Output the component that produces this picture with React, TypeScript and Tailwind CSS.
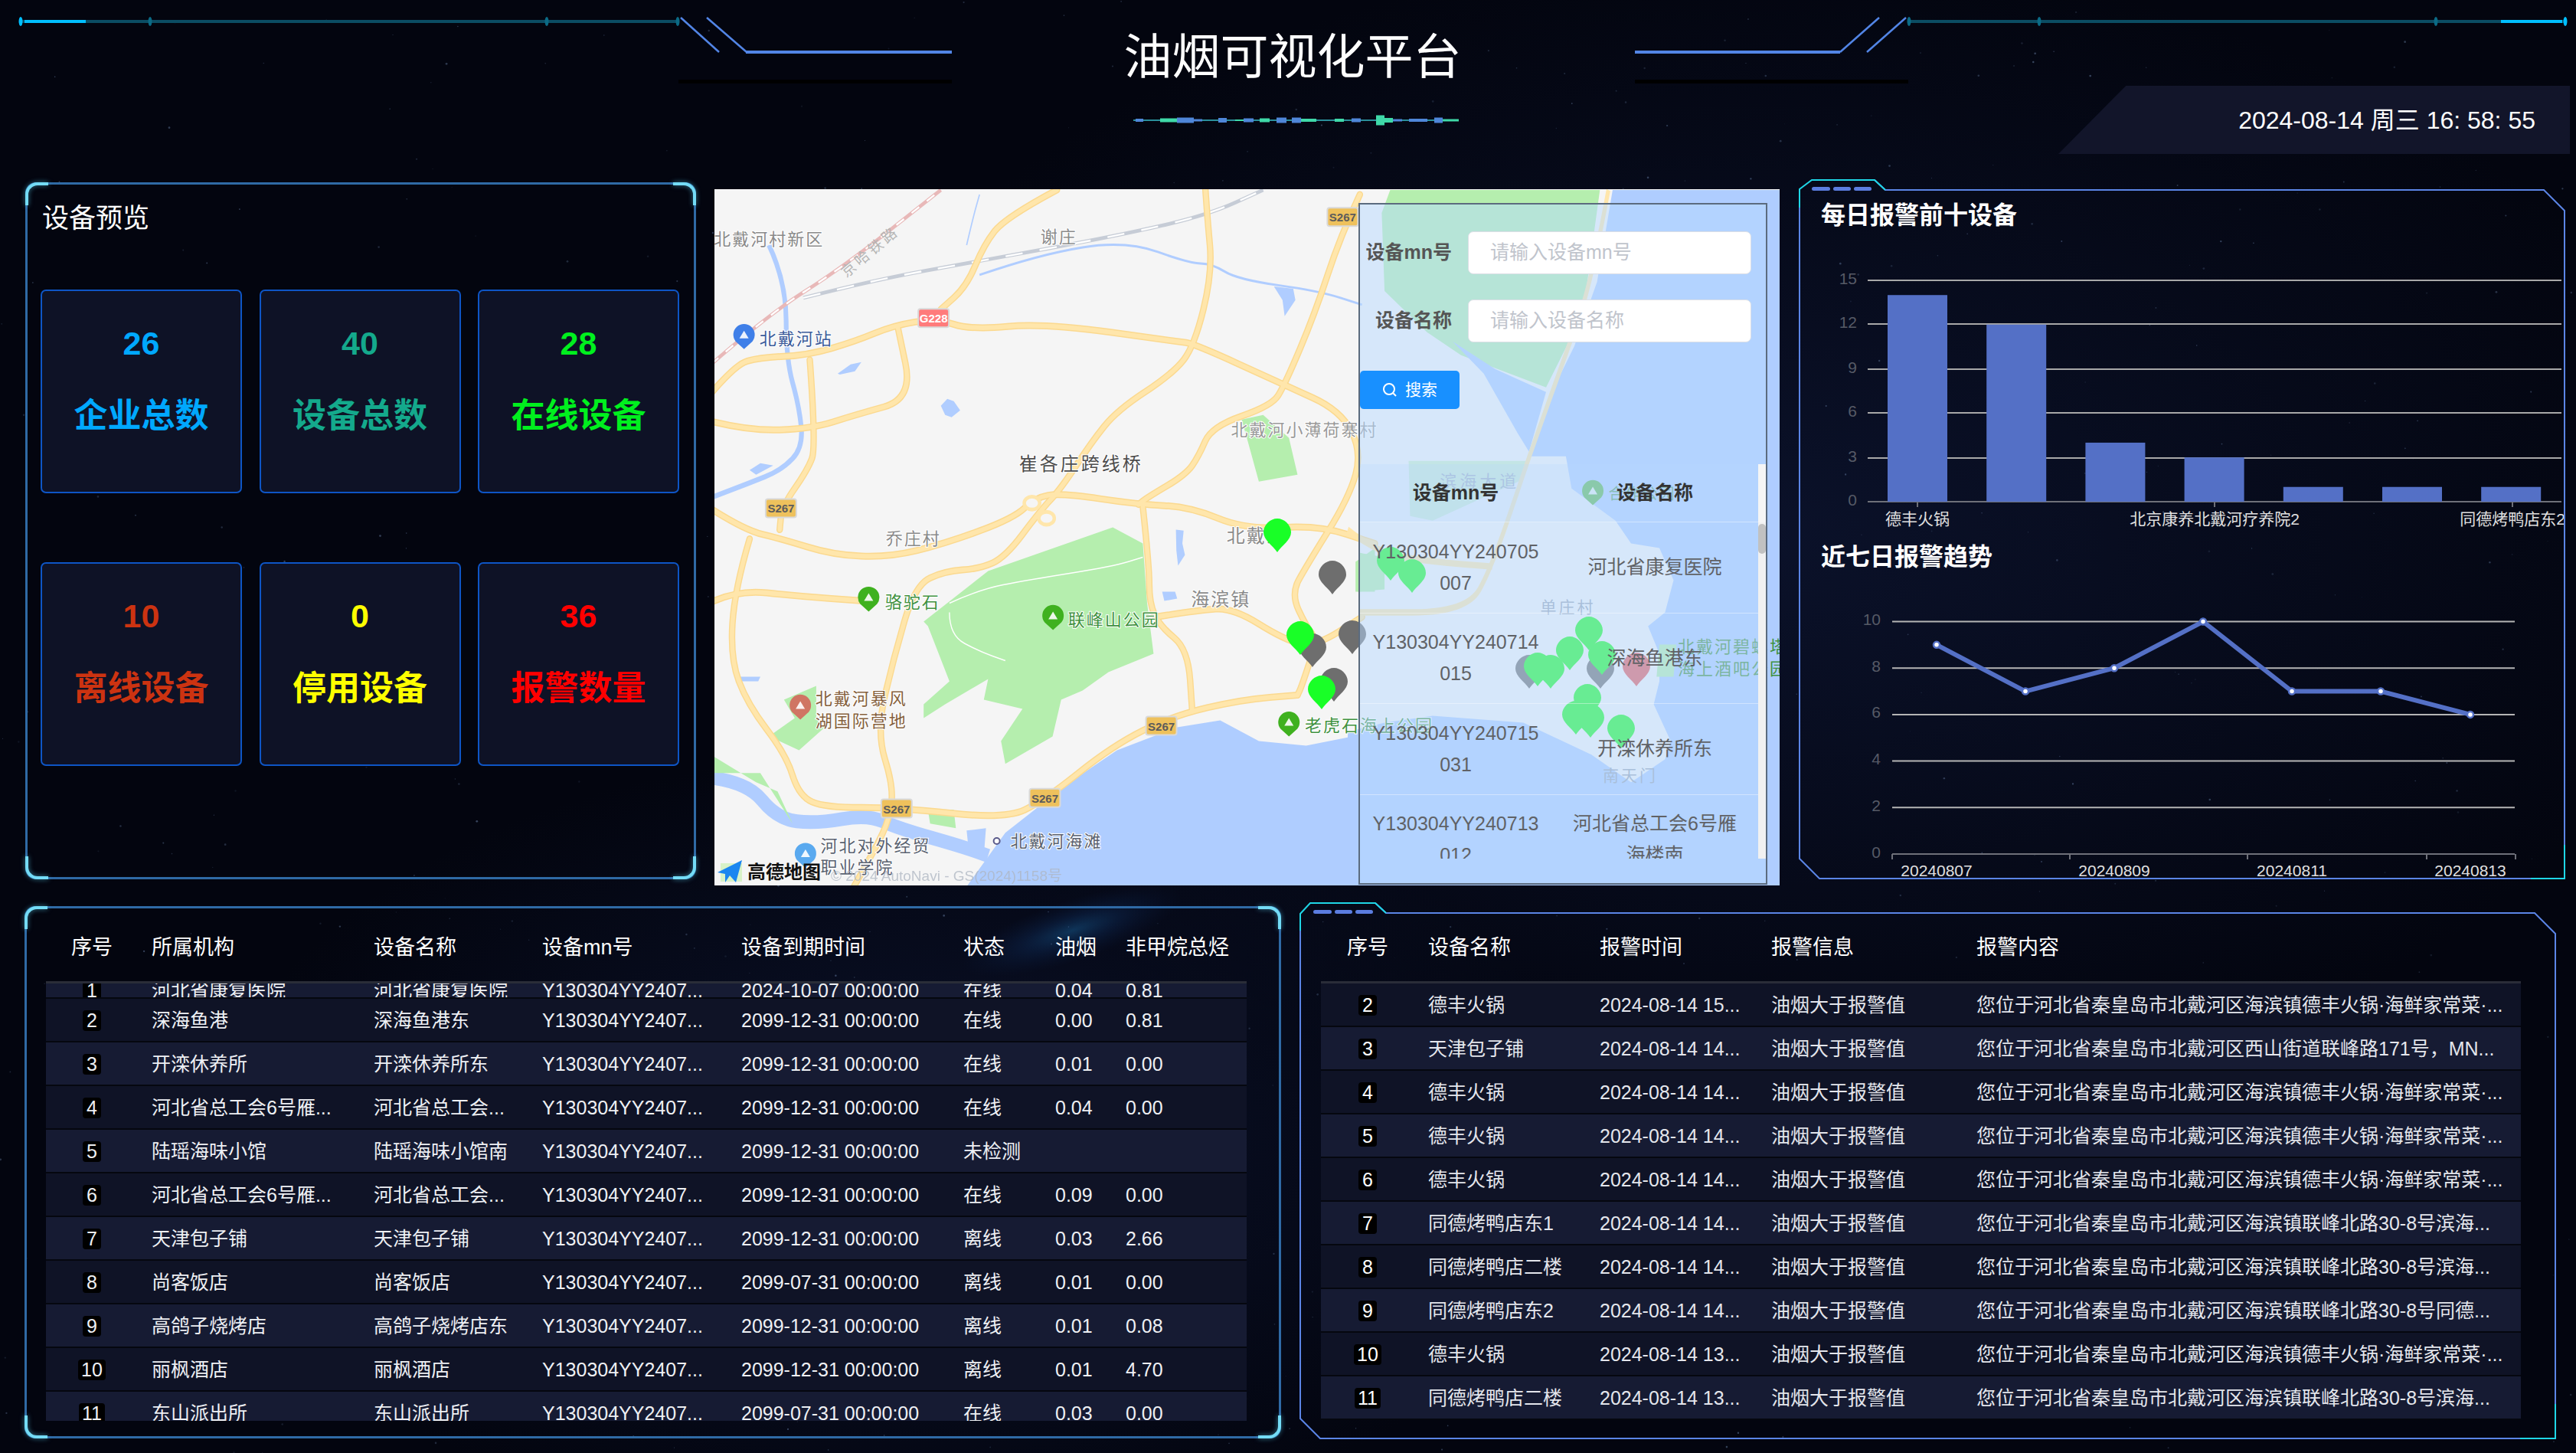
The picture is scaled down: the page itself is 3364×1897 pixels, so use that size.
import React from "react";

const font = "font-['Liberation_Sans','Noto_Sans_CJK_SC',sans-serif]";

type Pt = [number, number];

// midpoint-quadratic smoothing for map roads
function smooth(pts: Pt[]) {
  let d = `M${pts[0][0]} ${pts[0][1]}`;
  for (let i = 1; i < pts.length - 1; i++) {
    const mx = (pts[i][0] + pts[i + 1][0]) / 2;
    const my = (pts[i][1] + pts[i + 1][1]) / 2;
    d += ` Q${pts[i][0]} ${pts[i][1]} ${mx} ${my}`;
  }
  const l = pts[pts.length - 1];
  return d + ` L${l[0]} ${l[1]}`;
}

function poly(pts: Pt[]) {
  return pts.map((p) => p.join(",")).join(" ");
}

function Starfield() {
  let seed = 1337;
  const rnd = () => {
    seed = (seed * 16807) % 2147483647;
    return seed / 2147483647;
  };
  const stars = Array.from({ length: 700 }, () => ({
    x: rnd() * 3364,
    y: rnd() * 1897,
    r: 0.5 + rnd() * 0.9,
    o: 0.08 + rnd() * 0.3,
  }));
  return (
    <svg className="absolute inset-0" width={3364} height={1897}>
      <defs>
        <radialGradient id="glowA">
          <stop offset="0%" stopColor="#101a3c" stopOpacity={0.6} />
          <stop offset="100%" stopColor="#101a3c" stopOpacity={0} />
        </radialGradient>
        <radialGradient id="nebula">
          <stop offset="0%" stopColor="#1a6aa8" stopOpacity={0.45} />
          <stop offset="45%" stopColor="#123f7c" stopOpacity={0.25} />
          <stop offset="100%" stopColor="#0c2350" stopOpacity={0} />
        </radialGradient>
      </defs>
      <ellipse cx={2300} cy={700} rx={1250} ry={760} fill="url(#glowA)" />
      <ellipse cx={1180} cy={1500} rx={900} ry={520} fill="url(#glowA)" />
      <ellipse cx={1400} cy={1215} rx={150} ry={40} fill="url(#nebula)" transform="rotate(-18 1400 1215)" />
      {stars.map((s, i) => (
        <circle key={i} cx={s.x} cy={s.y} r={s.r} fill="#8fb0e0" opacity={s.o} />
      ))}
    </svg>
  );
}

const waveBars: [number, number, number, string][] = [
  [1483, 10, 4, "#4f86d9"], [1515, 22, 5, "#3fd9a8"], [1537, 22, 7, "#4f86d9"], [1559, 11, 3, "#4f86d9"],
  [1591, 11, 6, "#4f86d9"], [1613, 11, 2, "#3fd9a8"], [1624, 13, 5, "#4f86d9"], [1645, 13, 5, "#3fd9a8"],
  [1667, 13, 7, "#4f86d9"], [1687, 12, 7, "#4f86d9"], [1699, 20, 4, "#3fd9a8"], [1743, 12, 4, "#3fd9a8"],
  [1765, 12, 5, "#4f86d9"], [1797, 11, 13, "#3fd9a8"], [1808, 11, 6, "#3fd9a8"], [1819, 12, 3, "#4f86d9"],
  [1840, 24, 4, "#4f86d9"], [1873, 11, 7, "#4f86d9"], [1884, 21, 3, "#3fd9a8"],
];

function HeaderLines() {
  return (
    <svg className="absolute left-0 top-0" width={3364} height={235}>
      <rect x={27} y={26} width={858} height={4} fill="#0b4d63" />
      <rect x={32} y={26} width={80} height={4} fill="#00bfff" />
      {[27, 196, 714, 885].map((x, i) => (
        <ellipse key={x} cx={x} cy={28} rx={2.5} ry={6} fill={i === 0 ? "#00bfff" : "#0b6a85"} />
      ))}
      <line x1={889} y1={23} x2={939} y2={68} stroke="#5285e6" strokeWidth={2.5} />
      <line x1={923} y1={23} x2={975} y2={68} stroke="#5285e6" strokeWidth={2.5} />
      <rect x={974} y={66} width={269} height={4} fill="#5285e6" />
      <rect x={886} y={104} width={357} height={5} fill="#000" />

      <rect x={2493} y={26} width={858} height={4} fill="#0b4d63" />
      <rect x={3266} y={26} width={80} height={4} fill="#00bfff" />
      {[2493, 2663, 3181, 3350].map((x, i) => (
        <ellipse key={x} cx={x} cy={28} rx={2.5} ry={6} fill={i === 3 ? "#00bfff" : "#0b6a85"} />
      ))}
      <line x1={2454} y1={23} x2={2403} y2={68} stroke="#5285e6" strokeWidth={2.5} />
      <line x1={2489} y1={23} x2={2438} y2={68} stroke="#5285e6" strokeWidth={2.5} />
      <rect x={2135} y={66} width={268} height={4} fill="#5285e6" />
      <rect x={2135} y={104} width={357} height={5} fill="#000" />
    </svg>
  );
}

function Wave() {
  return (
    <svg viewBox="1480 135 425 46" className="h-[46px] w-[425px]">
      <rect x={1472} y={157} width={433} height={2} fill="#2a8f9a" />
      {waveBars.map(([x, w, h, c], i) => (
        <rect key={i} x={x} y={158 - h / 2} width={w} height={h} fill={c} />
      ))}
    </svg>
  );
}

function Header() {
  return (
    <div className="relative h-[235px] w-full">
      <HeaderLines />
      <div className="flex h-[112px] justify-center pl-[12px] pt-[43px]">
        <h1 className="relative text-[63px] font-normal leading-[63px] text-white">油烟可视化平台</h1>
      </div>
      <div className="grid grid-cols-[1480px_425px_1fr] items-center">
        <div />
        <Wave />
        <div className="flex justify-end pr-[8px]">
          <div className="flex h-[89px] w-[668px] items-center justify-end bg-[#12152a] pr-[45px] text-[32px] text-white [clip-path:polygon(13.2%_0,100%_0,100%_100%,0_100%)]">
            2024-08-14 周三 16: 58: 55
          </div>
        </div>
      </div>
    </div>
  );
}

// rounded frame with the four bright corners
function GlowFrame() {
  const corner = "absolute h-[30px] w-[30px] border-[#74dcf6] [filter:drop-shadow(0_0_3px_rgba(90,210,245,0.6))]";
  return (
    <>
      <span className={`${corner} -left-[3px] -top-[3px] rounded-tl-[16px] border-l-4 border-t-4`} />
      <span className={`${corner} -right-[3px] -top-[3px] rounded-tr-[16px] border-r-4 border-t-4`} />
      <span className={`${corner} -bottom-[3px] -left-[3px] rounded-bl-[16px] border-b-4 border-l-4`} />
      <span className={`${corner} -bottom-[3px] -right-[3px] rounded-br-[16px] border-b-4 border-r-4`} />
    </>
  );
}

const stats = [
  { n: "26", label: "企业总数", c: "text-[#00a8ff]" },
  { n: "40", label: "设备总数", c: "text-[#14a98c]" },
  { n: "28", label: "在线设备", c: "text-[#00f01e]" },
  { n: "10", label: "离线设备", c: "text-[#cc3311]" },
  { n: "0", label: "停用设备", c: "text-[#ffff00]" },
  { n: "36", label: "报警数量", c: "text-[#ff0000]" },
];

function DevicePreview() {
  return (
    <section className="relative mt-[3px] h-[910px] w-[876px] rounded-[14px] border-[3px] border-[#2f6aa5] pl-[17px] pt-[24px]">
      <GlowFrame />
      <h2 className="pl-[2px] text-[35px] font-normal leading-[40px] text-white">设备预览</h2>
      <div className="mt-[73px] grid w-[834px] grid-cols-[263px_263px_263px] gap-x-[22.5px] gap-y-[90px]">
        {stats.map((s) => (
          <div key={s.label} className={`flex h-[266px] flex-col items-center rounded-[7px] border-2 border-[#0e55c5] bg-[#0e1226] pt-[47px] font-bold ${s.c}`}>
            <div className="text-[43px] leading-[42px]">{s.n}</div>
            <div className="mt-[52px] text-[44px] leading-[44px]">{s.label}</div>
          </div>
        ))}
      </div>
    </section>
  );
}

const ROAD = "#fbd98f";
const ROAD_IN = "#ffe6ab";

const z4Roads: Pt[][] = [
  [[1165,20],[1170,90],[1182,210],[1140,370],[1090,430],[960,510],[900,580],[830,680],[780,730],[700,830],[640,855],[560,860],[490,890],[440,1050],[400,1210],[440,1330],[430,1400],[400,1460],[340,1560]],
  [[0,490],[70,410],[130,395],[240,390],[350,360],[440,325],[540,310],[620,335],[790,320],[1100,360],[1140,365],[1350,455],[1480,510],[1530,600],[1500,700],[1400,850],[1365,910],[1400,980],[1425,1010],[1390,1110],[1380,1130]],
  [[1525,40],[1480,130],[1420,300],[1350,455],[1320,500],[1180,545],[1150,610],[1120,650],[1030,700],[1010,715]],
  [[820,30],[700,90],[650,150],[610,240],[550,290]],
  [[0,530],[100,555],[250,550],[350,520],[485,485],[450,330]],
  [[245,400],[260,590],[240,640],[180,720],[175,770]],
  [[0,715],[90,770],[180,790],[300,825],[430,830],[560,800],[720,745],[770,700],[830,690],[1010,715],[1130,720],[1260,770],[1430,760],[1560,800]],
  [[0,935],[70,900],[220,915],[370,925]],
  [[105,790],[70,900],[60,1050],[100,1150],[190,1260],[220,1350],[280,1375],[450,1375],[700,1400],[790,1360],[950,1240],[1090,1175],[1250,1140],[1380,1130]],
  [[1020,720],[1035,850],[1035,930],[1060,980],[1125,1030],[1135,1165]],
  [[1050,960],[1150,945],[1230,940],[1350,1010],[1420,1025],[1530,960]],
];

const shields: [number, number, string][] = [[178,723,"S267"],[1063,1197,"S267"],[792,1354,"S267"],[447,1377,"S267"],[1485,89,"S267"]];

const mapLabels: [string, number, number, number, string, number][] = [
  ["北戴河村新区", 22, 138, 22, "#8a8a8a", 2],
  ["谢庄", 782, 133, 22, "#8a8a8a", 2],
  ["北戴河站", 128, 355, 22, "#3b5b9a", 2],
  ["崔各庄跨线桥", 732, 627, 24, "#4d4d4d", 3],
  ["北戴河小薄荷寨村", 1225, 553, 22, "#999999", 2],
  ["乔庄村", 422, 790, 22, "#8a8a8a", 2],
  ["北戴河", 1215, 783, 24, "#8a8a8a", 2],
  ["海滨镇", 1132, 922, 24, "#8a8a8a", 2],
  ["骆驼石", 420, 928, 22, "#3f913f", 2],
  ["联峰山公园", 846, 966, 22, "#3f913f", 2],
  ["北戴河暴风", 258, 1138, 22, "#85603c", 2],
  ["湖国际营地", 258, 1186, 22, "#85603c", 2],
  ["老虎石海上公园", 1397, 1197, 22, "#3f913f", 2],
  ["北戴河海滩", 712, 1448, 22, "#5a6270", 2],
  ["河北对外经贸", 270, 1458, 22, "#5a6270", 2],
  ["职业学院", 270, 1505, 22, "#5a6270", 2],
];

// pin positions in map pixels
const grayPins: Pt[] = [[807, 505], [781, 600], [833, 583], [809, 645], [1064, 628], [1157, 628]];
const greenPins: Pt[] = [[735, 450], [765, 584], [793, 655], [883, 487], [911, 503], [1075, 625], [1092, 628], [1117, 604], [1142, 578], [1159, 610], [1140, 666], [1125, 688], [1144, 692], [1184, 706]];

function Pin({ x, y, c }: { x: number; y: number; c: string }) {
  return (
    <path
      d={`M${x} ${y + 24} C${x - 6} ${y + 15} ${x - 18} ${y + 8} ${x - 18} ${y - 2} C${x - 18} ${y - 12} ${x - 9} ${y - 20} ${x} ${y - 20} C${x + 9} ${y - 20} ${x + 18} ${y - 12} ${x + 18} ${y - 2} C${x + 18} ${y + 8} ${x + 6} ${y + 15} ${x} ${y + 24} Z`}
      fill={c}
    />
  );
}

function Poi({ x, y, c }: { x: number; y: number; c: string }) {
  return (
    <g>
      <path d={`M${x} ${y + 17} L${x - 11} ${y + 7} A14 14 0 1 1 ${x + 11} ${y + 7} Z`} fill={c} />
      <path d={`M${x - 6} ${y + 3} L${x} ${y - 7} L${x + 6} ${y + 3} Z`} fill="#fff" opacity={0.9} />
    </g>
  );
}

function MapDrawing() {
  const lx = (z: number) => z * 0.5612 - 13;
  const ly = (z: number) => z * 0.5995 - 17;
  const sx = (z: number) => 827 + z * 0.37;
  return (
    <svg className="absolute inset-0" width={1391} height={909} viewBox="0 0 1391 909">
      <rect width={1391} height={909} fill="#f5f5f5" />
      <g transform="translate(-13,-17) scale(0.5612,0.5995)">
        {/* river and sea, left part */}
        <path d={smooth([[150,150],[190,230],[190,400],[220,500],[230,590],[180,640],[100,670],[15,700]])} stroke="#b0cdff" strokeWidth={11} fill="none" />
        <path d={smooth([[640,215],[780,170],[980,140],[1130,190],[1180,190],[1240,225],[1430,250],[1530,280]])} stroke="#b0cdff" strokeWidth={5} fill="none" />
        <path d={smooth([[610,150],[625,90],[640,40]])} stroke="#b0cdff" strokeWidth={3} fill="none" />
        <path d={smooth([[15,1310],[100,1320],[170,1400],[260,1410],[380,1390],[450,1420],[600,1460],[660,1480]])} stroke="#b0cdff" strokeWidth={30} fill="none" />
        <polygon points={poly([[1325,240],[1370,245],[1375,270],[1350,305],[1345,270]])} fill="#b0cdff" />
        <polygon points={poly([[550,500],[565,485],[580,490],[595,510],[575,525],[560,520]])} fill="#b0cdff" />
        <polygon points={poly([[310,430],[340,410],[365,405],[350,425],[315,432]])} fill="#b0cdff" />
        <polygon points={poly([[105,640],[130,625],[160,630],[120,650]])} fill="#b0cdff" />
        <polygon points={poly([[80,1090],[130,1090],[125,1100],[85,1100]])} fill="#b0cdff" />
        <polygon points={poly([[1097,770],[1115,772],[1112,800],[1118,825],[1102,848],[1098,815]])} fill="#b0cdff" />
        <polygon points={poly([[1065,905],[1095,905],[1100,920],[1070,925]])} fill="#b0cdff" />
        <polygon points={poly([[610,1425],[655,1420],[650,1480],[615,1470]])} fill="#b0cdff" />
        {/* green */}
        <polygon points={poly([[510,970],[660,860],[950,765],[1020,800],[1030,930],[1045,1040],[940,1080],[880,1120],[830,1140],[810,1220],[700,1280],[690,1230],[740,1160],[650,1140],[660,1095],[560,1150],[510,1180],[510,1150],[570,1100],[520,980]])} fill="#b5eeae" />
        <polygon points={poly([[185,1140],[260,1110],[260,1180],[280,1200],[220,1250],[150,1220],[210,1180]])} fill="#b5eeae" />
        <polygon points={poly([[15,1260],[120,1320],[170,1340],[205,1410],[130,1300],[15,1300]])} fill="#b5eeae" />
        <polygon points={poly([[1250,530],[1300,520],[1360,570],[1380,650],[1290,665],[1265,580]])} fill="#b5eeae" />
        <polygon points={poly([[1515,840],[1560,810],[1560,905],[1515,905]])} fill="#b5eeae" />
        <polygon points={poly([[520,1380],[580,1380],[585,1420],[525,1410]])} fill="#b5eeae" />
        <path d={smooth([[570,930],[640,900],[750,880],[950,850],[1020,830]])} stroke="#fff" strokeWidth={2.5} fill="none" />
        <path d={smooth([[570,950],[570,1000],[640,1035],[700,1055]])} stroke="#fff" strokeWidth={2.5} fill="none" />
        {/* rail */}
        <path d={smooth([[15,410],[150,300],[320,200],[550,30]])} stroke="#e8b8b8" strokeWidth={8} fill="none" />
        <path d={smooth([[15,410],[150,300],[320,200],[550,30]])} stroke="#fff" strokeWidth={4} strokeDasharray="22 22" fill="none" />
        <path d={smooth([[230,265],[400,225],[640,185],[960,130],[1170,85],[1300,30]])} stroke="#c6ccd6" strokeWidth={8} fill="none" />
        <path d={smooth([[230,265],[400,225],[640,185],[960,130],[1170,85],[1300,30]])} stroke="#fff" strokeWidth={4} strokeDasharray="40 40" fill="none" />
      </g>
      <g transform="translate(827,-17) scale(0.37,0.5995)">
        {/* right side: green, sea, peninsula */}
        <polygon points={poly([[150,30],[890,30],[830,300],[700,460],[400,390],[280,340],[130,250],[120,80]])} fill="#b5eeae" />
        <polygon points={poly([[935,30],[1530,30],[1530,1545],[0,1545],[0,1210],[130,1190],[300,1175],[620,1190],[860,1260],[1000,1320],[1120,1270],[1140,1230],[1080,1150],[1100,1100],[1100,1040],[1060,980],[1120,950],[1150,880],[1100,810],[1000,800],[945,750],[790,680],[770,610],[640,610],[720,470],[800,370],[880,230]])} fill="#afcdff" />
        <polygon points={poly([[370,360],[520,420],[700,470],[640,600],[600,560],[480,430]])} fill="#afcdff" />
        <polygon points={poly([[215,620],[640,620],[620,660],[300,750],[220,740]])} fill="#b5eeae" opacity={0.6} />
        <polygon points={poly([[40,820],[130,830],[130,900],[35,905]])} fill="#b5eeae" />
        <polygon points={poly([[1100,1020],[1160,1020],[1150,1090],[1090,1090]])} fill="#b5eeae" />
      </g>
      <g transform="translate(-13,-17) scale(0.5612,0.5995)">
        {/* sea on the left part */}
        <polygon points={poly([[600,1560],[700,1430],[850,1320],[960,1250],[1100,1200],[1200,1185],[1290,1230],[1400,1240],[1535,1215],[1535,1560]])} fill="#afcdff" />
        {z4Roads.map((r, i) => (
          <path key={i} d={smooth(r)} stroke={ROAD} strokeWidth={15} fill="none" strokeLinecap="round" />
        ))}
        {z4Roads.map((r, i) => (
          <path key={i} d={smooth(r)} stroke={ROAD_IN} strokeWidth={10} fill="none" strokeLinecap="round" />
        ))}
        <ellipse cx={762} cy={712} rx={18} ry={14} fill="#f5f5f5" stroke={ROAD_IN} strokeWidth={8} />
        <ellipse cx={796} cy={745} rx={18} ry={14} fill="#f5f5f5" stroke={ROAD_IN} strokeWidth={8} />
      </g>
      <g transform="translate(827,-17) scale(0.37,0.5995)">
        <path d={smooth([[920,30],[860,230],[780,370],[640,610],[510,850],[420,950],[40,950]])} stroke={ROAD_IN} strokeWidth={14} fill="none" />
        <path d={smooth([[0,770],[100,820],[300,840],[510,850]])} stroke={ROAD_IN} strokeWidth={14} fill="none" />
      </g>

      {shields.map(([x, y, t]) => (
        <g key={`${x}`} transform={`translate(${lx(x)},${ly(y)})`}>
          <rect x={-20} y={-12} width={40} height={24} rx={3} fill="#eec15c" stroke="#d9d9d9" strokeWidth={2} />
          <text textAnchor="middle" y={6} fontSize={15} fontWeight={700} fill="#5b5b5b">{t}</text>
        </g>
      ))}
      <g transform={`translate(${lx(533)},${ly(309)})`}>
        <rect x={-20} y={-12} width={40} height={24} rx={3} fill="#ff7b7b" stroke="#d9d9d9" strokeWidth={2} />
        <text textAnchor="middle" y={6} fontSize={15} fontWeight={700} fill="#fff">G228</text>
      </g>

      <Poi x={lx(92)} y={ly(348)} c="#3f7fe8" />
      <Poi x={lx(382)} y={ly(920)} c="#3fb11f" />
      <Poi x={lx(811)} y={ly(960)} c="#3fb11f" />
      <Poi x={lx(223)} y={ly(1155)} c="#d07563" />
      <Poi x={lx(1360)} y={ly(1192)} c="#3fb11f" />
      <Poi x={lx(235)} y={ly(1478)} c="#59a9ef" />
      <circle cx={lx(680)} cy={ly(1448)} r={4} fill="#fff" stroke="#5a5a8a" strokeWidth={2} />

      {mapLabels.map(([t, x, y, s, c, sp]) => (
        <text key={t} x={lx(x)} y={ly(y)} fontSize={s} fill={c} letterSpacing={sp} dominantBaseline="central" stroke="#fff" strokeWidth={2} paintOrder="stroke">{t}</text>
      ))}
      <text transform={`translate(${lx(330)},${ly(222)}) rotate(-40)`} fontSize={19} fill="#b5b5b5" letterSpacing={4}>京哈铁路</text>
      <text x={sx(680)} y={ly(938)} fontSize={21} fill="#9aa5b5" letterSpacing={3} dominantBaseline="central">单庄村</text>
      <text x={sx(900)} y={ly(1305)} fontSize={21} fill="#9aa5b5" letterSpacing={3} dominantBaseline="central">南天门</text>
      <text x={sx(1165)} y={ly(1025)} fontSize={22} fill="#3f913f" letterSpacing={2} dominantBaseline="central">北戴河碧螺塔</text>
      <text x={sx(1165)} y={ly(1073)} fontSize={22} fill="#3f913f" letterSpacing={2} dominantBaseline="central">海上酒吧公园</text>
      <text x={sx(325)} y={ly(665)} fontSize={22} fill="#9aa5b5" letterSpacing={4} dominantBaseline="central">滨海大道</text>
      <text x={sx(920)} y={ly(693)} fontSize={20} fill="#3f913f" letterSpacing={2} dominantBaseline="central">合作公园</text>
      <Poi x={sx(865)} y={ly(688)} c="#3fb11f" />

      {grayPins.map(([x, y], i) => <Pin key={i} x={x} y={y} c="#6e6e6e" />)}
      {greenPins.map(([x, y], i) => <Pin key={i} x={x} y={y} c="#19ff27" />)}
      <Pin x={1204} y={625} c="#e45a5a" />

      {/* logo */}
      <rect x={8} y={880} width={28} height={24} fill="#d8f2c8" />
      <polygon points="4,892 36,876 28,905 20,896 14,905 14,894" fill="#1a86f0" />
      <text x={43} y={900} fontSize={24} fontWeight={700} fill="#111">高德地图</text>
      <text x={152} y={903} fontSize={19} fill="#aeb6c2" opacity={0.75}>© 2024 AutoNavi - GS(2024)1158号</text>
    </svg>
  );
}

const overlayRows = [
  ["Y130304YY240705\n007", "河北省康复医院"],
  ["Y130304YY240714\n015", "深海鱼港东"],
  ["Y130304YY240715\n031", "开滦休养所东"],
  ["Y130304YY240713\n012", "河北省总工会6号雁\n海楼南"],
];

function FormRow({ label, hint }: { label: string; hint: string }) {
  return (
    <div className="flex items-center gap-[21px]">
      <label className="w-[120px] shrink-0 whitespace-nowrap text-right text-[25px] font-bold text-[#555]">{label}</label>
      <div className="flex h-[56px] w-[370px] items-center rounded-[7px] border border-[#dcdfe6] bg-white pl-[28px] text-[25px] text-[#c0c4cc]">{hint}</div>
    </div>
  );
}

function MapPanel() {
  return (
    <section className="relative mt-[12px] ml-[24px] h-[909px] w-[1391px] overflow-hidden">
      <MapDrawing />
      <div className="absolute left-[841px] top-[18px] h-[890px] w-[534px] border-2 border-[#5b6b7e] bg-[#b7d9ff]/50">
        <div className="flex flex-col gap-[33px] pt-[35px]">
          <FormRow label="设备mn号" hint="请输入设备mn号" />
          <FormRow label="设备名称" hint="请输入设备名称" />
        </div>
        <button className="mt-[37px] flex h-[50px] w-[130px] items-center justify-center gap-[10px] rounded-[5px] bg-[#1890ff] text-[21px] text-white">
          <svg width="20" height="20" viewBox="0 0 20 20" fill="none" stroke="#fff" strokeWidth="2">
            <circle cx="9" cy="9" r="7" />
            <path d="M14.5 14.5 L18 18" />
          </svg>
          搜索
        </button>
        <div className="mt-[72px] flex h-[515px] overflow-hidden">
          <div className="w-[520px]">
            <div className="grid h-[76px] grid-cols-[250px_270px] items-center border-b border-white/40 bg-[#b7d9ff]/25 text-center text-[25px] font-bold text-[#333]">
              <div>设备mn号</div>
              <div>设备名称</div>
            </div>
            {overlayRows.map((r) => (
              <div key={r[0]} className="grid h-[118.5px] shrink-0 grid-cols-[250px_270px] items-center border-b border-white/40 text-center text-[25px] leading-[41px] text-[#606266] whitespace-pre-line">
                <div>{r[0]}</div>
                <div>{r[1]}</div>
              </div>
            ))}
          </div>
          <div className="flex w-[11px] flex-col">
            <div className="h-[76px] bg-[#f5f5f5]" />
            <div className="flex-1 bg-[#f1f1f1]">
              <div className="mt-[2px] h-[39px] rounded-full bg-[#c1c1c1]" />
            </div>
          </div>
        </div>
      </div>
    </section>
  );
}

function ChamferFrame({ box, blue, cyan }: { box: string; blue: string; cyan: string }) {
  return (
    <svg className="absolute inset-0 h-full w-full overflow-visible" viewBox={box} fill="none">
      <path d={blue} stroke="#5b85e6" strokeWidth={2} />
      <path d={cyan} stroke="#1fd6e6" strokeWidth={2} />
    </svg>
  );
}

function Dashes({ className }: { className: string }) {
  return (
    <div className={`absolute flex gap-[4px] ${className}`}>
      <span className="h-[5px] w-[24px] rounded-full bg-[#5b7de0]" />
      <span className="h-[5px] w-[23px] rounded-full bg-[#5b7de0]" />
      <span className="h-[5px] w-[23px] rounded-full bg-[#5b7de0]" />
    </div>
  );
}

const bars = [14, 12, 4, 3, 1, 1, 1];

function BarChart() {
  const gridY = [655, 598, 539, 482, 423, 366];
  return (
    <svg viewBox="2350 340 999 360" className="h-[360px] w-[999px] overflow-visible">
      {gridY.map((y, i) => (
        <g key={y}>
          <line x1={2439} x2={3345} y1={y} y2={y} stroke={i === 0 ? "#6e7079" : "#a8a8a8"} strokeWidth={2} />
          <text x={2425} y={y - 3} textAnchor="end" dominantBaseline="central" fontSize={21} fill="#565a66">{i * 3}</text>
        </g>
      ))}
      {bars.map((b, i) => (
        <rect key={i} x={2465 + i * 129.2} y={655 - b * 19.27} width={78} height={b * 19.27} fill="#5470c6" />
      ))}
      {[2504, 2892, 3281].map((x) => (
        <line key={x} x1={x} x2={x} y1={655} y2={662} stroke="#6e7079" strokeWidth={2} />
      ))}
      <text x={2504} y={677} textAnchor="middle" dominantBaseline="central" fontSize={21} fill="#e0e0e0">德丰火锅</text>
      <text x={2892} y={677} textAnchor="middle" dominantBaseline="central" fontSize={21} fill="#e0e0e0">北京康养北戴河疗养院2</text>
      <text x={3281} y={677} textAnchor="middle" dominantBaseline="central" fontSize={21} fill="#e0e0e0">同德烤鸭店东2</text>
    </svg>
  );
}

const trend = [9, 7, 8, 10, 7, 7, 6];
const trendX = [2529, 2645, 2761, 2877, 2993, 3109, 3226];

function LineChart() {
  const yOf = (v: number) => 1115 - v * 30.35;
  return (
    <svg viewBox="2350 790 999 357" className="h-[357px] w-[999px] overflow-visible">
      {[0, 2, 4, 6, 8, 10].map((v) => (
        <g key={v}>
          <line x1={2471} x2={3284} y1={yOf(v)} y2={yOf(v)} stroke={v === 0 ? "#6e7079" : "#b5b5b5"} strokeWidth={2} />
          <text x={2456} y={yOf(v) - 3} textAnchor="end" dominantBaseline="central" fontSize={21} fill="#565a66">{v}</text>
        </g>
      ))}
      {[2471, 2703, 2935, 3169, 3285].map((x) => (
        <line key={x} x1={x} x2={x} y1={1115} y2={1122} stroke="#6e7079" strokeWidth={2} />
      ))}
      <polyline points={trend.map((v, i) => `${trendX[i]},${yOf(v)}`).join(" ")} fill="none" stroke="#5470c6" strokeWidth={6} />
      {trend.map((v, i) => (
        <circle key={i} cx={trendX[i]} cy={yOf(v)} r={4} fill="#fff" stroke="#5470c6" strokeWidth={2.5} />
      ))}
      {[[2529, "20240807"], [2761, "20240809"], [2993, "20240811"], [3226, "20240813"]].map(([x, t]) => (
        <text key={t} x={x} y={1136} textAnchor="middle" dominantBaseline="central" fontSize={21} fill="#e0e0e0">{t}</text>
      ))}
    </svg>
  );
}

function AlarmCharts() {
  return (
    <section className="relative ml-[26px] h-[912px] w-[999px] pt-[30px]">
      <ChamferFrame
        box="2350 235 999 912"
        blue="M2448 235 L2462 248 L3322 248 L3349 275 L3349 1147 L2376 1147 L2350 1121 L2350 271"
        cyan="M2350 271 L2350 247 L2366 235 L2448 235 L2462 248 M3305 1147 L3349 1147 L3349 1103"
      />
      <Dashes className="left-[16px] top-[9px]" />
      <h2 className="pl-[28px] text-[32px] font-bold leading-[32px] text-white">每日报警前十设备</h2>
      <div className="mt-[43px]"><BarChart /></div>
      <h2 className="mt-[11px] pl-[28px] text-[32px] font-bold leading-[32px] text-white">近七日报警趋势</h2>
      <div className="mt-[47px]"><LineChart /></div>
    </section>
  );
}

function Badge({ n }: { n: number }) {
  return (
    <span className="inline-flex h-[27px] min-w-[24px] items-center justify-center rounded-[4px] bg-black px-[4px]">{n}</span>
  );
}

const devices = [
  [1, "河北省康复医院", "河北省康复医院", "2024-10-07", "在线", "0.04", "0.81"],
  [2, "深海鱼港", "深海鱼港东", "2099-12-31", "在线", "0.00", "0.81"],
  [3, "开滦休养所", "开滦休养所东", "2099-12-31", "在线", "0.01", "0.00"],
  [4, "河北省总工会6号雁...", "河北省总工会...", "2099-12-31", "在线", "0.04", "0.00"],
  [5, "陆瑶海味小馆", "陆瑶海味小馆南", "2099-12-31", "未检测", "", ""],
  [6, "河北省总工会6号雁...", "河北省总工会...", "2099-12-31", "在线", "0.09", "0.00"],
  [7, "天津包子铺", "天津包子铺", "2099-12-31", "离线", "0.03", "2.66"],
  [8, "尚客饭店", "尚客饭店", "2099-07-31", "离线", "0.01", "0.00"],
  [9, "高鸽子烧烤店", "高鸽子烧烤店东", "2099-12-31", "离线", "0.01", "0.08"],
  [10, "丽枫酒店", "丽枫酒店", "2099-12-31", "离线", "0.01", "4.70"],
  [11, "东山派出所", "东山派出所", "2099-07-31", "在线", "0.03", "0.00"],
] as const;

const devCols = "grid grid-cols-[138px_290px_220px_260px_290px_120px_92px_158px] items-center";

function DeviceTable() {
  return (
    <section className="relative mt-[4px] h-[695px] w-[1641px] rounded-[14px] border-[3px] border-[#2f6aa5] pl-[25px] pr-[42px] pt-[37px] text-[25px] text-[#eef0f4]">
      <GlowFrame />
      <div className={`${devCols} h-[28px] text-[27px] leading-[28px] text-white`}>
        <div className="pr-[18px] text-center">序号</div>
        <div>所属机构</div>
        <div>设备名称</div>
        <div>设备mn号</div>
        <div>设备到期时间</div>
        <div>状态</div>
        <div>油烟</div>
        <div>非甲烷总烃</div>
      </div>
      <div className="mt-[30px] h-[574px] overflow-hidden border-t-[3px] border-[#2a2d38]">
        {devices.map((d, i) => (
          <div
            key={d[0]}
            className={`${devCols} overflow-hidden border-b-2 border-[#05070f] ${i === 0 ? "h-[20px] [grid-template-rows:20px]" : "h-[57px] pt-[2px]"} ${i % 2 === 0 ? "bg-[#161b33]" : "bg-[#0f1326]"}`}
          >
            <div className="pr-[18px] text-center"><Badge n={d[0]} /></div>
            <div>{d[1]}</div>
            <div>{d[2]}</div>
            <div>Y130304YY2407...</div>
            <div>{d[3]} 00:00:00</div>
            <div>{d[4]}</div>
            <div>{d[5]}</div>
            <div>{d[6]}</div>
          </div>
        ))}
      </div>
    </section>
  );
}

const CONTENT_A = "您位于河北省秦皇岛市北戴河区海滨镇德丰火锅·海鲜家常菜·...";
const CONTENT_B = "您位于河北省秦皇岛市北戴河区海滨镇联峰北路30-8号滨海...";

const alarms: [number, string, string, string][] = [
  [2, "德丰火锅", "15...", CONTENT_A],
  [3, "天津包子铺", "14...", "您位于河北省秦皇岛市北戴河区西山街道联峰路171号，MN..."],
  [4, "德丰火锅", "14...", CONTENT_A],
  [5, "德丰火锅", "14...", CONTENT_A],
  [6, "德丰火锅", "14...", CONTENT_A],
  [7, "同德烤鸭店东1", "14...", CONTENT_B],
  [8, "同德烤鸭店二楼", "14...", CONTENT_B],
  [9, "同德烤鸭店东2", "14...", "您位于河北省秦皇岛市北戴河区海滨镇联峰北路30-8号同德..."],
  [10, "德丰火锅", "13...", CONTENT_A],
  [11, "同德烤鸭店二楼", "13...", CONTENT_B],
];

const alarmCols = "grid grid-cols-[140px_224px_224px_268px_711px] items-center";

function AlarmTable() {
  return (
    <section className="relative ml-[25px] h-[699px] w-[1639px] pl-[27px] pr-[45px] pt-[44px] text-[25px] text-[#e4e6ec]">
      <ChamferFrame
        box="1698 1179 1639 699"
        blue="M1796 1179 L1810 1192 L3310 1192 L3337 1219 L3337 1878 L1724 1878 L1698 1852 L1698 1215"
        cyan="M1698 1215 L1698 1193 L1711 1179 L1796 1179 L1810 1192 M3291 1878 L3337 1878 L3337 1833"
      />
      <Dashes className="left-[17px] top-[9px]" />
      <div className={`${alarmCols} h-[28px] text-[27px] leading-[28px] text-white`}>
        <div className="pr-[18px] text-center">序号</div>
        <div>设备名称</div>
        <div>报警时间</div>
        <div>报警信息</div>
        <div>报警内容</div>
      </div>
      <div className="mt-[30px] h-[573px] overflow-hidden border-t-[3px] border-[#2a2d38]">
        {alarms.map((a, i) => (
          <div key={a[0]} className={`${alarmCols} h-[57px] border-b-2 border-[#05070f] pt-[2px] ${i % 2 === 0 ? "bg-[#0f1326]" : "bg-[#161b33]"}`}>
            <div className="pr-[18px] text-center text-white"><Badge n={a[0]} /></div>
            <div>{a[1]}</div>
            <div>2024-08-14 {a[2]}</div>
            <div>油烟大于报警值</div>
            <div>{a[3]}</div>
          </div>
        ))}
      </div>
    </section>
  );
}

export default function App() {
  return (
    <div className={`relative h-[1897px] w-[3364px] overflow-hidden bg-[#03050f] ${font}`}>
      <Starfield />
      <div className="relative">
        <Header />
        <div className="flex h-[944px] items-start pl-[33px]">
          <DevicePreview />
          <MapPanel />
          <AlarmCharts />
        </div>
        <div className="flex items-start pl-[32px]">
          <DeviceTable />
          <AlarmTable />
        </div>
      </div>
    </div>
  );
}
